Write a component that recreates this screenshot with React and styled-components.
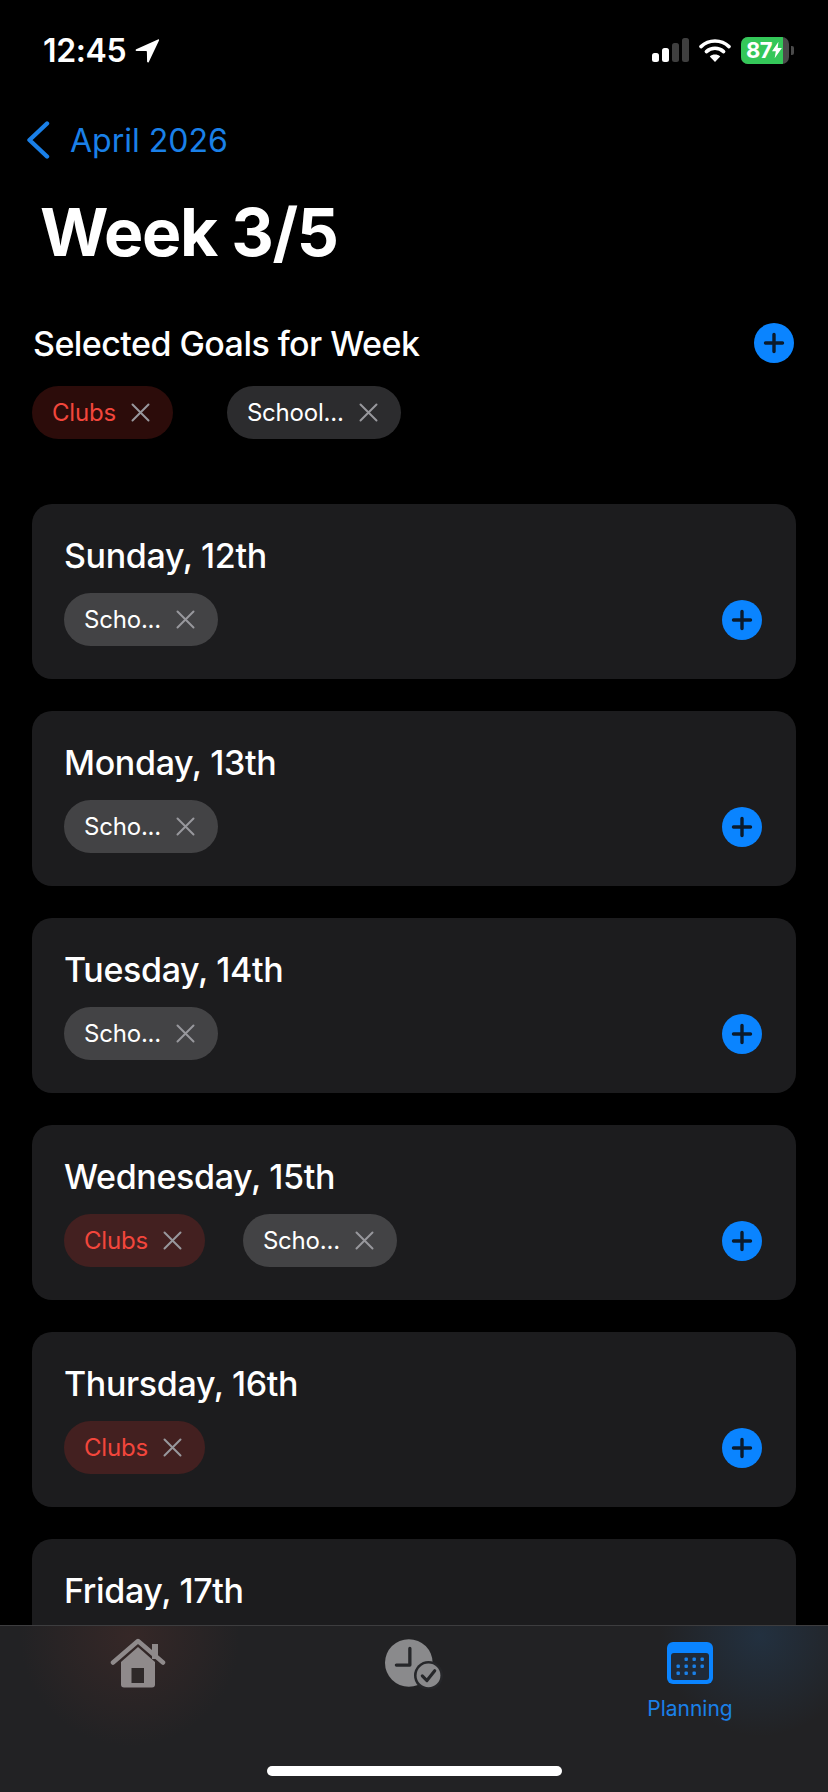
import styled, { createGlobalStyle } from "styled-components"

const GlobalStyle = createGlobalStyle`
    html, body {
        margin: 0;
        padding: 0;
        background: #000;
    }
    * {
        box-sizing: border-box;
    }
`

const days = [
    { title: "Sunday, 12th", goals: [{ label: "Scho...", kind: "school" }] },
    { title: "Monday, 13th", goals: [{ label: "Scho...", kind: "school" }] },
    { title: "Tuesday, 14th", goals: [{ label: "Scho...", kind: "school" }] },
    {
        title: "Wednesday, 15th",
        goals: [
            { label: "Clubs", kind: "clubs" },
            { label: "Scho...", kind: "school" },
        ],
    },
    { title: "Thursday, 16th", goals: [{ label: "Clubs", kind: "clubs" }] },
    { title: "Friday, 17th", goals: [] },
]

const CloseIcon = () => (
    <svg width="19" height="19" viewBox="0 0 19 19" fill="none">
        <path d="M1.5 1.5L17.5 17.5M17.5 1.5L1.5 17.5" stroke="#98989d" strokeWidth="2" strokeLinecap="round" />
    </svg>
)

const PlusIcon = () => (
    <svg width="40" height="40" viewBox="0 0 40 40" fill="none">
        <circle cx="20" cy="20" r="20" fill="#0a84ff" />
        <path d="M20 11.5V28.5M11.5 20H28.5" stroke="#0b1a2b" strokeWidth="3.4" strokeLinecap="round" />
    </svg>
)

const GoalChip = ({ label, kind, surface }) => (
    <Chip $kind={kind} $surface={surface}>
        <ChipLabel $kind={kind}>{label}</ChipLabel>
        <CloseIcon />
    </Chip>
)

const App = () => {
    return (
        <Screen>
            <GlobalStyle />
            <StatusBar>
                <StatusLeft>
                    <Time>12:45</Time>
                    <svg width="25" height="25" viewBox="0 0 25 25">
                        <path d="M23.5 1.2L1.2 11.2c-1 .5-.7 1.7.3 1.7l9.4.2c.6 0 1 .4 1 1l.2 9.4c0 1 1.3 1.3 1.7.4L24 2.4c.3-.8-.3-1.5-.5-1.2z" fill="#fff" />
                    </svg>
                </StatusLeft>
                <StatusRight>
                    <svg width="37" height="24" viewBox="0 0 37 24">
                        <rect x="0" y="15" width="7" height="9" rx="2.5" fill="#fff" />
                        <rect x="10" y="10" width="7" height="14" rx="2.5" fill="#fff" />
                        <rect x="20" y="5" width="7" height="19" rx="2.5" fill="#3f3f3f" />
                        <rect x="30" y="0" width="7" height="24" rx="2.5" fill="#3f3f3f" />
                    </svg>
                    <svg width="32" height="24" viewBox="0 0 32 24" fill="none">
                        <path d="M2 8.6C9.8 1.2 22.2 1.2 30 8.6" stroke="#fff" strokeWidth="3.6" strokeLinecap="round" />
                        <path d="M7.4 13.6C12.2 9.2 19.8 9.2 24.6 13.6" stroke="#fff" strokeWidth="3.6" strokeLinecap="round" />
                        <path d="M16 24L10.8 18.4C13.6 15.8 18.4 15.8 21.2 18.4L16 24Z" fill="#fff" />
                    </svg>
                    <Battery>
                        <BatteryBody>
                            <BatteryLevel>
                                <span>87</span>
                                <svg width="13" height="22" viewBox="0 0 13 22">
                                    <path d="M8.5 0L0 12.5h5L3.5 22 13 8.5H7.5L8.5 0z" fill="#fff" />
                                </svg>
                            </BatteryLevel>
                        </BatteryBody>
                        <BatteryNub />
                    </Battery>
                </StatusRight>
            </StatusBar>

            <BackRow>
                <svg width="24" height="38" viewBox="0 0 24 38" fill="none">
                    <path d="M21 2.5L3.5 19L21 35.5" stroke="#1a80e8" strokeWidth="4.4" strokeLinecap="round" strokeLinejoin="round" />
                </svg>
                <BackLabel>April 2026</BackLabel>
            </BackRow>

            <PageTitle>Week 3/5</PageTitle>

            <GoalsHeader>
                <GoalsTitle>Selected Goals for Week</GoalsTitle>
                <PlusIcon />
            </GoalsHeader>
            <ChipRow $gap={54}>
                <GoalChip label="Clubs" kind="clubs" surface="page" />
                <GoalChip label="School..." kind="school" surface="page" />
            </ChipRow>

            <DayList>
                {days.map((day) => (
                    <DayCard key={day.title}>
                        <DayTitle>{day.title}</DayTitle>
                        <DayRow>
                            <ChipRow $gap={38}>
                                {day.goals.map((goal) => (
                                    <GoalChip key={goal.kind} label={goal.label} kind={goal.kind} surface="card" />
                                ))}
                            </ChipRow>
                            <PlusIcon />
                        </DayRow>
                    </DayCard>
                ))}
            </DayList>

            <TabBar>
                <TabRow>
                    <Tab $top={0}>
                        <svg width="56" height="50" viewBox="0 0 56 50">
                            <path d="M11 24L28 9l17 15v22.500a3 3 0 0 1-3 3H14a3 3 0 0 1-3-3z" fill="#8f8a8b" />
                            <rect x="21.500" y="30" width="12.500" height="15" fill="#2e2929" />
                            <path d="M3 24.500L28 3l25 21.500" fill="none" stroke="#8f8a8b" strokeWidth="4.500" strokeLinecap="round" strokeLinejoin="round" />
                            <rect x="42" y="6" width="6" height="15" fill="#8f8a8b" />
                        </svg>
                    </Tab>
                    <Tab $top={1}>
                        <svg width="58" height="50" viewBox="0 0 56 48">
                            <circle cx="23" cy="23" r="23" fill="#8a8a8c" />
                            <path d="M24 9V25H11" fill="none" stroke="#26272a" strokeWidth="3.200" strokeLinecap="round" strokeLinejoin="round" />
                            <circle cx="42" cy="35" r="14" fill="#26272a" />
                            <circle cx="42" cy="35" r="11.500" fill="#8a8a8c" />
                            <path d="M36 35.500L40.500 40L48 30.500" fill="none" stroke="#26272a" strokeWidth="3" strokeLinecap="round" strokeLinejoin="round" />
                        </svg>
                    </Tab>
                    <Tab $top={4}>
                        <svg width="46" height="42" viewBox="0 0 46 42">
                            <rect width="46" height="42" rx="6" fill="#0a84ff" />
                            <rect x="4" y="11" width="38" height="27" rx="3" fill="#1f2a38" />
                            {[
                                [19, 17], [27, 17], [35, 17],
                                [11, 24], [19, 24], [27, 24], [35, 24],
                                [11, 31], [19, 31], [27, 31],
                            ].map(([x, y]) => (
                                <rect key={`${x}-${y}`} x={x - 1.5} y={y - 1.5} width="3.400" height="3.400" rx="1" fill="#1a80e8" />
                            ))}
                        </svg>
                        <TabLabel>Planning</TabLabel>
                    </Tab>
                </TabRow>
                <HomeIndicator />
            </TabBar>
        </Screen>
    )
}

const Screen = styled('div')`
    position: relative;
    width: 828px;
    height: 1792px;
    overflow: hidden;
    background-color: #000;
    color: #fff;
    font-family: Inter, "Liberation Sans", sans-serif;
`

const StatusBar = styled('div')`
    display: flex;
    justify-content: space-between;
    align-items: center;
    height: 50px;
    margin-top: 25px;
    padding: 0 34px 0 43px;
`

const StatusLeft = styled('div')`
    display: flex;
    align-items: center;
    gap: 9px;
`

const Time = styled('span')`
    font-size: 32px;
    font-weight: 600;
    letter-spacing: -0.4px;
`

const StatusRight = styled('div')`
    display: flex;
    align-items: center;
    gap: 10px;
`

const Battery = styled('div')`
    display: flex;
    align-items: center;
    gap: 2px;
`

const BatteryBody = styled('div')`
    width: 48px;
    height: 27px;
    border-radius: 7px;
    background-color: #4a4a4a;
    overflow: hidden;
`

const BatteryLevel = styled('div')`
    display: flex;
    align-items: center;
    justify-content: space-between;
    width: 42px;
    height: 100%;
    padding: 0 1px 0 5px;
    background-color: #34c759;
    font-size: 22px;
    font-weight: 700;
    letter-spacing: -0.5px;
    color: #fff;
`

const BatteryNub = styled('div')`
    width: 3px;
    height: 9px;
    border-radius: 0 2px 2px 0;
    background-color: #4a4a4a;
`

const BackRow = styled('div')`
    display: flex;
    align-items: center;
    gap: 20px;
    height: 40px;
    margin-top: 45px;
    padding-left: 26px;
`

const BackLabel = styled('span')`
    font-size: 32px;
    color: #1a80e8;
`

const PageTitle = styled('h1')`
    margin: 32px 0 0;
    padding-left: 40px;
    font-size: 66px;
    line-height: 80px;
    font-weight: 700;
    letter-spacing: -1.3px;
`

const GoalsHeader = styled('div')`
    display: flex;
    justify-content: space-between;
    align-items: center;
    height: 40px;
    margin-top: 51px;
    padding: 0 34px 0 33px;
`

const GoalsTitle = styled('h2')`
    margin: 0;
    font-size: 34px;
    font-weight: 550;
    letter-spacing: -0.55px;
`

const ChipRow = styled('div')`
    display: flex;
    gap: ${(props) => props.$gap}px;
    ${(props) => props.$gap === 54 && 'margin: 23px 0 0 32px;'}
`

const Chip = styled('div')`
    display: flex;
    align-items: center;
    gap: 15px;
    height: 53px;
    padding: 0 23px 0 20px;
    border-radius: 27px;
    background-color: ${(props) => {
        if (props.$surface === 'page') {
            return props.$kind === 'clubs' ? '#2c0c0a' : '#2c2c2e'
        }
        return props.$kind === 'clubs' ? '#432020' : '#434345'
    }};
`

const ChipLabel = styled('span')`
    font-size: 24px;
    letter-spacing: -0.2px;
    color: ${(props) => (props.$kind === 'clubs' ? '#f2463c' : '#fff')};
`

const DayList = styled('div')`
    display: flex;
    flex-direction: column;
    gap: 32px;
    margin-top: 65px;
    padding: 0 32px;
`

const DayCard = styled('div')`
    height: 175px;
    flex-shrink: 0;
    padding: 31px 34px 33px 32px;
    border-radius: 20px;
    background-color: #1c1c1e;
`

const DayTitle = styled('h3')`
    margin: 0 0 16px;
    font-size: 34px;
    line-height: 42px;
    font-weight: 550;
    letter-spacing: -0.35px;
`

const DayRow = styled('div')`
    display: flex;
    justify-content: space-between;
    align-items: center;
    height: 53px;
`

const TabBar = styled('div')`
    position: absolute;
    left: 0;
    right: 0;
    bottom: 0;
    height: 167px;
    border-top: 1px solid #3d3d3f;
    background:
        radial-gradient(circle at 130px 10px, rgba(90, 50, 45, 0.35), transparent 110px),
        radial-gradient(circle at 760px 10px, rgba(35, 70, 105, 0.4), transparent 100px),
        #222224;
`

const TabRow = styled('div')`
    display: grid;
    grid-template-columns: 276px 276px 276px;
    height: 140px;
    padding-top: 12px;
`

const Tab = styled('div')`
    display: flex;
    flex-direction: column;
    align-items: center;
    padding-top: ${(props) => props.$top}px;
`

const TabLabel = styled('span')`
    margin-top: 12px;
    font-size: 21px;
    line-height: 26px;
    color: #1a80e8;
`

const HomeIndicator = styled('div')`
    width: 295px;
    height: 10px;
    margin: 0 auto;
    border-radius: 5px;
    background-color: #fff;
`

export default App
